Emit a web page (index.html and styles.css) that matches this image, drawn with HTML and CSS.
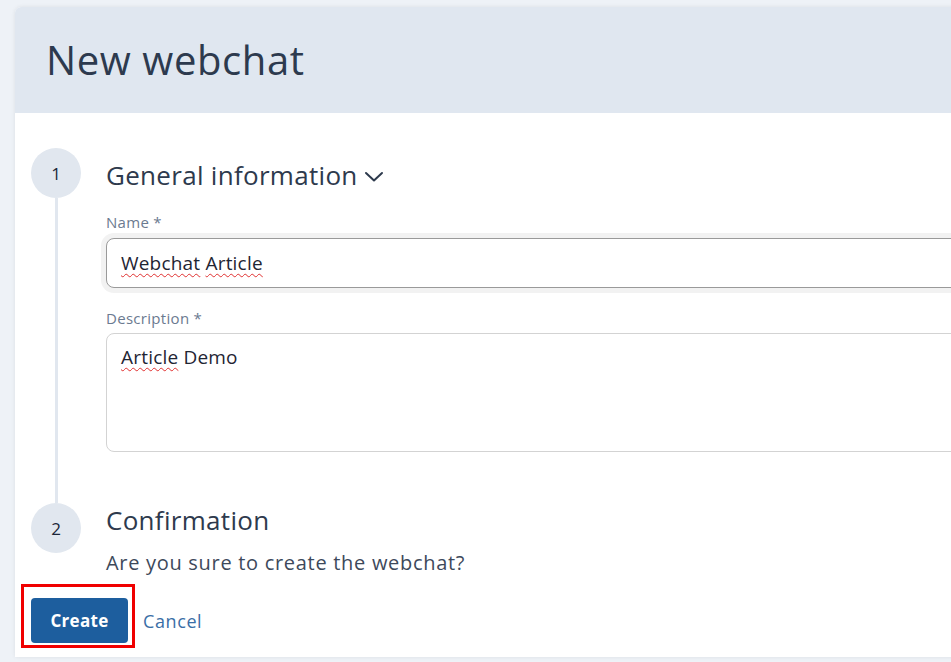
FILE: index.html
```html
<!DOCTYPE html>
<html lang="en">
<head>
<meta charset="utf-8">
<title>New webchat</title>
<link rel="stylesheet" href="styles.css">
</head>
<body>
<div class="page">
  <div class="card">
    <header class="card-header">
      <h1 class="title">New webchat</h1>
    </header>
    <div class="card-body">
      <div class="step step-first">
        <div class="rail">
          <div class="circle">1</div>
          <div class="line"></div>
        </div>
        <div class="step-content">
          <h2 class="step-title">General information
            <svg class="chevron" width="20" height="12" viewBox="0 0 20 12"><polyline points="2,3 10,10.5 18,3" fill="none" stroke="#2e3a4d" stroke-width="2" stroke-linecap="round" stroke-linejoin="round"/></svg>
          </h2>
          <label class="field-label">Name *</label>
          <div class="input input-focus"><span class="typo">Webchat</span> <span class="typo">Article</span></div>
          <label class="field-label field-label-2">Description *</label>
          <div class="input textarea"><span class="typo">Article</span> Demo</div>
        </div>
      </div>
      <div class="step">
        <div class="rail">
          <div class="circle">2</div>
        </div>
        <div class="step-content step-content-2">
          <h2 class="step-title">Confirmation</h2>
          <p class="question">Are you sure to create the webchat?</p>
        </div>
      </div>
      <div class="actions">
        <div class="btn-wrap">
          <button class="btn-primary">Create</button>
          <span class="highlight"></span>
        </div>
        <a class="btn-link">Cancel</a>
      </div>
    </div>
  </div>
</div>
</body>
</html>
```
FILE: styles.css
```css
html, body {
  margin: 0;
  padding: 0;
  background: #eef2f7;
  overflow: hidden;
  font-family: "Open Sans", "Liberation Sans", sans-serif;
  color: #2e3a4d;
}
.page {
  padding: 7px 0 0 15px;
  height: 662px;
  box-sizing: border-box;
}
.card {
  width: 1000px;
  height: 650px;
  background: #ffffff;
  border-radius: 6px 0 0 0;
  box-shadow: 0 0 4px rgba(0, 0, 0, 0.08);
  overflow: hidden;
}
.card-header {
  height: 106px;
  background: #e0e7f0;
  display: flex;
  align-items: center;
  padding-left: 31px;
  box-sizing: border-box;
}
.title {
  margin: 0;
  font-size: 40px;
  font-weight: 500;
  letter-spacing: 0.6px;
  color: #2d3a4e;
  line-height: 48px;
}
.card-body {
  padding: 35px 0 14px 16px;
}
.step {
  display: grid;
  grid-template-columns: 50px 1fr;
  column-gap: 25px;
}
.rail {
  display: flex;
  flex-direction: column;
  align-items: center;
}
.circle {
  width: 50px;
  height: 50px;
  border-radius: 50%;
  background: #e1e7ef;
  display: flex;
  align-items: center;
  justify-content: center;
  font-size: 17px;
  color: #1b2638;
  flex: none;
}
.line {
  width: 3px;
  flex: 1;
  background: #e1e7ef;
}
.step-content {
  padding: 12px 0 51px 0;
}
.step-content-2 {
  padding: 2px 0 0 0;
}
.step-title {
  margin: 0;
  font-size: 26px;
  font-weight: 400;
  letter-spacing: 0.3px;
  line-height: 30px;
  color: #2e3a4d;
  display: flex;
  align-items: center;
}
.chevron {
  margin-left: 6px;
  margin-top: 2px;
}
.field-label {
  display: block;
  font-size: 15px;
  letter-spacing: 0.3px;
  line-height: 18px;
  color: #6b7a90;
  margin: 23px 0 7px 0;
}
.field-label-2 {
  margin: 21px 0 6px 0;
}
.input {
  box-sizing: border-box;
  height: 50px;
  border: 1px solid #d3d3d3;
  border-radius: 8px;
  padding: 0 14px;
  font-size: 19px;
  letter-spacing: 0.2px;
  line-height: 48px;
  color: #1f2533;
  background: #fff;
}
.input-focus {
  border-color: #9a9a9a;
  box-shadow: 0 0 0 5px #f2f2f2;
}
.textarea {
  height: 119px;
  line-height: 24px;
  padding-top: 11px;
}
.typo {
  text-decoration: underline wavy #e03030;
  text-decoration-thickness: 1px;
  text-underline-offset: 3px;
}
.question {
  margin: 16px 0 0 0;
  font-size: 20px;
  letter-spacing: 0.7px;
  line-height: 24px;
  color: #3d495b;
}
.actions {
  display: flex;
  align-items: center;
  margin-top: 23px;
}
.btn-wrap {
  position: relative;
}
.btn-primary {
  display: block;
  height: 45px;
  width: 97px;
  border: none;
  border-radius: 4px;
  background: #1d5e9e;
  color: #ffffff;
  font-family: "Open Sans", "Liberation Sans", sans-serif;
  font-size: 17px;
  font-weight: 700;
  letter-spacing: 0.3px;
  padding: 0;
}
.highlight {
  position: absolute;
  top: -14px;
  left: -10px;
  right: -7px;
  bottom: -5px;
  border: 3px solid #f00000;
  box-sizing: border-box;
  pointer-events: none;
}
.btn-link {
  margin-left: 15px;
  font-size: 18px;
  letter-spacing: 0.6px;
  color: #3a6ea6;
  cursor: pointer;
}
```
